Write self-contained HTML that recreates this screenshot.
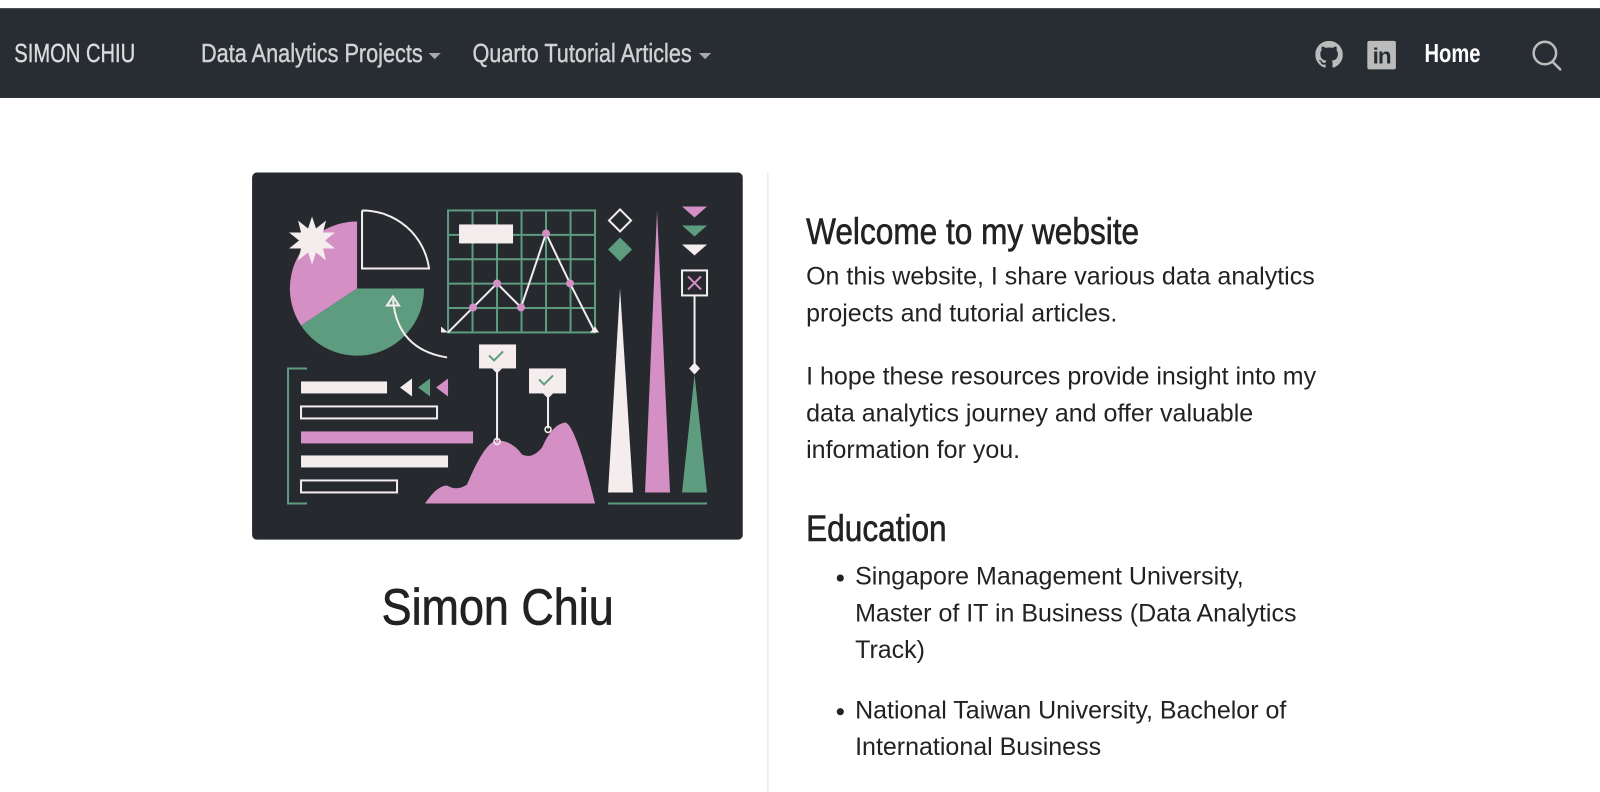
<!DOCTYPE html>
<html><head><meta charset="utf-8"><style>
*{margin:0;padding:0;box-sizing:border-box}
body{width:1600px;height:776px;overflow:hidden;background:#fff;font-family:"Liberation Sans",sans-serif;color:#222}
#w{position:absolute;left:0;top:0;width:1568px;height:761px;transform:scale(1.0204);transform-origin:0 0}
.nav{position:absolute;top:8px;left:0;width:1600px;height:88px;background:#282c33}
.sx{display:inline-block;transform-origin:0 50%;white-space:nowrap}
.nav .t{position:absolute;top:31px;font-size:25px;color:#d2d2d2;white-space:nowrap;-webkit-text-stroke:0.4px #d2d2d2}
.caret{display:inline-block;width:0;height:0;border-left:6px solid transparent;border-right:6px solid transparent;border-top:6px solid #aaa;vertical-align:middle;position:absolute;top:13px}
.div{position:absolute;left:752px;top:169px;width:1px;height:607px;background:#e2e2e2}
.r{position:absolute;left:790px;width:600px;font-size:24.5px;line-height:36px;color:#222;white-space:nowrap}
h2{position:absolute;left:790px;font-size:36px;font-weight:normal;color:#222;white-space:nowrap;-webkit-text-stroke:0.6px #222}
li{list-style:none;position:relative}
li:before{content:"";position:absolute;left:-18px;top:15px;width:7px;height:7px;border-radius:50%;background:#222}
</style></head><body><div id="w">
<div class="nav">
<div class="t" style="left:14px;color:#ddd"><span class="sx" style="transform:scaleX(0.79)">SIMON CHIU</span></div>
<div class="t" style="left:197px"><span class="sx" style="transform:scaleX(0.85)">Data Analytics Projects</span><span class="caret" style="left:223px"></span></div>
<div class="t" style="left:463px"><span class="sx" style="transform:scaleX(0.85)">Quarto Tutorial Articles</span><span class="caret" style="left:222px"></span></div>
<svg style="position:absolute;left:1289px;top:32px" width="27" height="27" viewBox="0 0 16 16"><path fill="#bbb" d="M8 0C3.58 0 0 3.58 0 8c0 3.54 2.29 6.53 5.47 7.59.4.07.55-.17.55-.38 0-.19-.01-.82-.01-1.49-2.01.37-2.53-.49-2.69-.94-.09-.23-.48-.94-.82-1.130-.28-.15-.68-.52-.01-.53.63-.01 1.08.58 1.23.82.72 1.21 1.87.87 2.33.66.07-.52.28-.87.51-1.07-1.78-.2-3.64-.89-3.64-3.95 0-.87.31-1.59.82-2.15-.08-.2-.36-1.02.08-2.12 0 0 .67-.21 2.2.82.64-.18 1.32-.27 2-.27s1.36.09 2 .27c1.53-1.04 2.2-.82 2.2-.82.44 1.1.16 1.92.08 2.12.51.56.82 1.27.82 2.15 0 3.07-1.87 3.75-3.65 3.95.29.25.54.73.54 1.48 0 1.07-.01 1.93-.01 2.2 0 .21.15.46.55.38A8.01 8.01 0 0 0 16 8c0-4.42-3.58-8-8-8z"/></svg>
<div style="position:absolute;left:1340px;top:32px;width:28px;height:28px;background:#bbb;border-radius:2px;color:#282c33;font:bold 22px 'Liberation Sans',sans-serif;text-align:center;line-height:30px;letter-spacing:-1px">in</div>
<div class="t" style="left:1396px;color:#fff;font-weight:bold;-webkit-text-stroke:0"><span class="sx" style="transform:scaleX(0.79)">Home</span></div>
<svg style="position:absolute;left:1500px;top:30px" width="32" height="34" viewBox="0 0 32 34"><circle cx="14" cy="14" r="11" fill="none" stroke="#bbb" stroke-width="2.5"/><line x1="22" y1="23" x2="29" y2="30" stroke="#bbb" stroke-width="2.5" stroke-linecap="round"/></svg>
</div>

<svg style="position:absolute;left:247px;top:169px" width="481" height="360" viewBox="0 0 481 360">
<rect width="481" height="360" rx="5" fill="#262a2e"/>
<g transform="scale(0.98) translate(-5,-3)">
<path d="M110 119 L110 52 A67 67 0 0 0 54 156 Z" fill="#d48fc4"/>
<path d="M110 119 L177 119 A67 67 0 0 1 54 156 Z" fill="#5e9c80"/>
<path d="M115 41 L115 99 L182 99 A67 67 0 0 0 115 41" fill="none" stroke="#f5eef0" stroke-width="2"/>
<polygon fill="#f5ecee" points="65,47 69,59 79,51 76,63 88,63 78,71 88,79 76,79 79,91 69,83 65,95 61,83 51,91 54,79 42,79 52,71 42,63 54,63 51,51 61,59"/>
<path d="M200 188 Q150 180 146 130" fill="none" stroke="#f5eef0" stroke-width="2"/>
<polygon points="140,136 146,127 152,136" fill="none" stroke="#f5eef0" stroke-width="2"/>
<g stroke="#5e9c80" stroke-width="2" fill="none">
<rect x="201" y="41" width="147" height="122"/>
<path d="M225.5 41V163M250 41V163M274.5 41V163M299 41V163M323.5 41V163M201 65.4H348M201 89.8H348M201 114.2H348M201 138.6H348"/>
</g>
<rect x="212" y="55" width="54" height="19" fill="#f5ecee"/>
<polyline points="201,163 226,138 250,114 274,138 299,64 323,114 348,163" fill="none" stroke="#f5eef0" stroke-width="2"/>
<g fill="#d48fc4"><circle cx="226" cy="138" r="4"/><circle cx="250" cy="114" r="4"/><circle cx="274" cy="138" r="4"/><circle cx="299" cy="64" r="4"/><circle cx="323" cy="114" r="4"/></g>
<polygon points="194,157 201,163 194,163" fill="#f5eef0"/><polygon points="348,157 352,163 343,163" fill="#f5eef0"/>
<polygon points="373,40 384,51 373,62 362,51" fill="none" stroke="#f5eef0" stroke-width="2"/>
<polygon points="373,68 385,80 373,92 361,80" fill="#5e9c80"/>
<polygon points="435,37 460,37 447.5,48" fill="#d48fc4"/>
<polygon points="435,56 460,56 447.5,67" fill="#5e9c80"/>
<polygon points="435,75 460,75 447.5,86" fill="#f5ecee"/>
<rect x="435" y="101" width="25" height="25" fill="none" stroke="#f5eef0" stroke-width="2"/>
<path d="M441 107L454 120M454 107L441 120" stroke="#d48fc4" stroke-width="2"/>
<line x1="447.5" y1="126" x2="447.5" y2="199" stroke="#f5eef0" stroke-width="2"/>
<polygon points="447.5,193 453,199 447.5,205 442,199" fill="#f5eef0"/>
<polygon points="447.5,205 460,323 435,323" fill="#5e9c80"/>
<polygon points="373,119 386,323 361,323" fill="#f5ecee"/>
<polygon points="410,41 423,323 398,323" fill="#d48fc4"/>
<line x1="361" y1="334" x2="460" y2="334" stroke="#5e9c80" stroke-width="2"/>
<path d="M60 199H41V334H60" fill="none" stroke="#5e9c80" stroke-width="2"/>
<rect x="54" y="212" width="86" height="12" fill="#f5ecee"/>
<rect x="54" y="237" width="136" height="12" fill="none" stroke="#f5eef0" stroke-width="2"/>
<rect x="54" y="262" width="172" height="12" fill="#d48fc4"/>
<rect x="54" y="286" width="147" height="12" fill="#f5ecee"/>
<rect x="54" y="311" width="96" height="12" fill="none" stroke="#f5eef0" stroke-width="2"/>
<polygon points="165,209 153,218 165,227" fill="#f5ecee"/>
<polygon points="183,209 171,218 183,227" fill="#5e9c80"/>
<polygon points="201,209 189,218 201,227" fill="#d48fc4"/>
<path d="M178 334 Q190 316 200 316 Q210 322 220 315 Q238 272 250 271 Q265 271 275 285 Q285 290 295 278 Q305 255 318 253 Q328 254 348 334 Z" fill="#d48fc4"/>
<line x1="250" y1="199" x2="250" y2="271" stroke="#f5eef0" stroke-width="2"/>
<line x1="301" y1="224" x2="301" y2="259" stroke="#f5eef0" stroke-width="2"/>
<circle cx="250" cy="272" r="3" fill="none" stroke="#f5eef0" stroke-width="1.5"/>
<circle cx="301" cy="260" r="3" fill="none" stroke="#f5eef0" stroke-width="1.5"/>
<rect x="232" y="175" width="37" height="24" fill="#f5ecee"/><polygon points="245,199 255,199 250,204" fill="#f5ecee"/>
<rect x="282" y="199" width="37" height="25" fill="#f5ecee"/><polygon points="296,224 306,224 301,229" fill="#f5ecee"/>
<path d="M242 186l5 5 9-9M292 210l5 5 9-9" fill="none" stroke="#5e9c80" stroke-width="2"/>
</g>
</svg>
<div style="position:absolute;left:374px;top:566px;font-size:50px;color:#222;-webkit-text-stroke:0.7px #222"><span class="sx" style="transform:scaleX(0.88)">Simon Chiu</span></div>
<div class="div"></div>

<h2 style="top:206px"><span class="sx" style="transform:scaleX(0.86)">Welcome to my website</span></h2>
<div class="r" style="top:254px">On this website, I share various data analytics<br>projects and tutorial articles.</div>
<div class="r" style="top:352px">I hope these resources provide insight into my<br>data analytics journey and offer valuable<br>information for you.</div>
<h2 style="top:497px"><span class="sx" style="transform:scaleX(0.86)">Education</span></h2>
<ul class="r" style="top:548px;left:838px;width:460px">
<li>Singapore Management University,<br>Master of IT in Business (Data Analytics<br>Track)</li>
<li style="margin-top:23px">National Taiwan University, Bachelor of<br>International Business</li>
</ul>
</div></body></html>
